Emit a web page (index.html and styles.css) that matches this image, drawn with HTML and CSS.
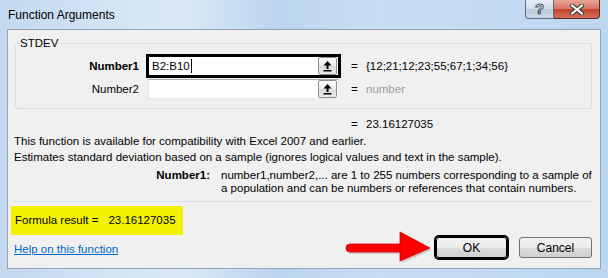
FILE: index.html
```html
<html>
<link rel="stylesheet" href="styles.css">

<head>
    <title>Function Arguments</title>
</head>

<body>
    <div class="window">
        <div class="titlebar">
            <span class="title">Function Arguments</span>
            <div class="caption">
                <span class="cap-help">?</span>
                <span class="cap-close">
                    <svg width="14" height="11" viewBox="0 0 14 11">
                        <path d="M2 1.5 L12 9.5 M12 1.5 L2 9.5" stroke="#3a3f48" stroke-width="4.2" stroke-linecap="round" />
                        <path d="M2 1.5 L12 9.5 M12 1.5 L2 9.5" stroke="#ffffff" stroke-width="2.2" stroke-linecap="round" />
                    </svg>
                </span>
            </div>
        </div>

        <div class="client">
            <fieldset class="group">
                <legend>STDEV</legend>
                <div class="args">
                    <label class="arg-name bold">Number1</label>
                    <div class="ref-box active">
                        <span class="ref-text">B2:B10</span><span class="caret"></span>
                        <span class="collapse">
                            <svg width="9" height="12" viewBox="0 0 9 12">
                                <polygon points="4.5,1 8.5,5.5 0.5,5.5" fill="#000" />
                                <rect x="3.5" y="5" width="2" height="4" fill="#000" />
                                <rect x="0.5" y="10" width="8" height="1.5" fill="#000" />
                            </svg>
                        </span>
                    </div>
                    <span class="eq">=</span>
                    <span class="arg-value">{12;21;12;23;55;67;1;34;56}</span>

                    <label class="arg-name">Number2</label>
                    <div class="ref-box">
                        <span class="ref-text"></span>
                        <span class="collapse">
                            <svg width="9" height="12" viewBox="0 0 9 12">
                                <polygon points="4.5,1 8.5,5.5 0.5,5.5" fill="#000" />
                                <rect x="3.5" y="5" width="2" height="4" fill="#000" />
                                <rect x="0.5" y="10" width="8" height="1.5" fill="#000" />
                            </svg>
                        </span>
                    </div>
                    <span class="eq">=</span>
                    <span class="arg-value hint">number</span>
                </div>
            </fieldset>

            <div class="result-line"><span class="eq">=</span><span>23.16127035</span></div>

            <p class="desc">This function is available for compatibility with Excel 2007 and earlier.<br>
                Estimates standard deviation based on a sample (ignores logical values and text in the sample).</p>

            <div class="arg-help">
                <span class="arg-help-name">Number1:</span>
                <span class="arg-help-text">number1,number2,... are 1 to 255 numbers corresponding to a sample of<br>a population and can be numbers or references that contain numbers.</span>
            </div>

            <div class="sep"></div>

            <div class="footer">
                <div class="footer-left">
                    <div class="formula">Formula result =<span class="formula-val">23.16127035</span></div>
                    <a class="help-link" href="#">Help on this function</a>
                </div>
                <div class="buttons">
                    <button class="btn ok">OK</button>
                    <button class="btn">Cancel</button>
                </div>
            </div>
        </div>

        <svg class="pointer" width="90" height="32" viewBox="0 0 90 32">
            <rect x="2" y="15" width="58" height="8" rx="4" fill="#8a8a8a" opacity="0.35" />
            <polygon points="57,3 87,19 57,32" fill="#8a8a8a" opacity="0.35" />
            <rect x="1" y="13" width="58" height="8" rx="4" fill="#ff0000" stroke="#d40000" stroke-width="0.8" />
            <polygon points="55,1 85,17 55,30" fill="#ff0000" stroke="#d40000" stroke-width="0.8" />
        </svg>
    </div>
</body>

</html>
```

FILE: styles.css
```css
body {
    margin: 0;
    width: 608px;
    height: 278px;
    overflow: hidden;
    font-family: "Liberation Sans", Arial, sans-serif;
    font-size: 11.5px;
    color: #000;
}

.window {
    position: relative;
    width: 608px;
    height: 278px;
    box-sizing: border-box;
    padding: 0 7px 9px 7px;
    background: linear-gradient(90deg, #c3d8ee 0%, #d6e6f5 22%, #dbe9f7 30%, #bcd5ee 45%, #c8ddf2 62%, #bdd7f1 100%);
    display: flex;
    flex-direction: column;
}

.titlebar {
    flex: none;
    height: 29px;
    display: flex;
    justify-content: space-between;
    align-items: flex-start;
}

.title {
    margin-top: 8px;
    margin-left: 1px;
    font-size: 12px;
    color: #000;
}

.caption {
    display: flex;
    margin-right: 1px;
}

.cap-help {
    width: 27px;
    height: 18px;
    border: 1px solid #5e6c7e;
    border-top: none;
    border-radius: 0 0 0 4px;
    background: linear-gradient(#e6edf5, #d3deea 50%, #bccbdc 52%, #cbd8e6);
    text-align: center;
    font-size: 15px;
    font-weight: bold;
    line-height: 18px;
    color: #fff;
    -webkit-text-stroke: 1px #4b5666;
}

.cap-close {
    width: 45px;
    height: 18px;
    border: 1px solid #5a2b24;
    border-top: none;
    border-left: none;
    border-radius: 0 0 4px 0;
    background: linear-gradient(#e8a597, #d77868 48%, #c4432f 52%, #d2705c);
    display: flex;
    align-items: center;
    justify-content: center;
}

.client {
    flex: 1;
    min-height: 0;
    background: #f0f0f0;
    border: 1px solid #95a4b5;
    padding: 6px 8px 0 6px;
    display: flex;
    flex-direction: column;
}

.group {
    margin: 0 0 0 1px;
    padding: 6px 0 9px 0;
    border: 1px solid #d5dfe5;
    border-radius: 3px;
}

.group legend {
    margin-left: 3px;
    padding: 0 1px;
    line-height: 14px;
}

.args {
    display: grid;
    grid-template-columns: 132px 203px 15px 1fr;
    grid-auto-rows: 20px;
    row-gap: 3px;
    align-items: center;
}

.arg-name {
    text-align: right;
    padding-right: 9px;
}

.bold {
    font-weight: bold;
}

.ref-box {
    width: 191px;
    height: 20px;
    box-sizing: border-box;
    background: #fff;
    border: 1px solid #abadb3;
    border-color: #abadb3 #e3e9ef #e3e9ef #e2e3ea;
    display: flex;
    align-items: center;
    padding: 0 1px 0 3px;
}

.ref-box.active {
    outline: 3px solid #000;
    outline-offset: -1px;
}

.ref-text {
    flex: none;
}

.caret {
    width: 1px;
    height: 14px;
    background: #000;
    margin-left: 1px;
}

.collapse {
    margin-left: auto;
    width: 17px;
    height: 16px;
    border: 1px solid #8e8f8f;
    border-radius: 2px;
    background: linear-gradient(#fdfdfd, #ececec 50%, #dcdcdc 52%, #e8e8e8);
    display: flex;
    align-items: center;
    justify-content: center;
}

.eq {
    display: inline-block;
    width: 15px;
}

.hint {
    color: #9d9d9d;
}

.result-line {
    margin-top: 8px;
    padding-left: 337px;
    line-height: 15px;
}

.desc {
    margin: 1px 0 0 0;
    line-height: 16px;
}

.arg-help {
    display: flex;
    margin-top: 4px;
    line-height: 13px;
    white-space: nowrap;
}

.arg-help-name {
    width: 196px;
    flex: none;
    text-align: right;
    font-weight: bold;
}

.arg-help-text {
    margin-left: 11px;
}

.sep {
    margin-top: 6px;
    height: 1px;
    flex: none;
    background: #d6dfe8;
}

.footer {
    flex: 1;
    display: flex;
    justify-content: space-between;
    align-items: flex-end;
    margin-top: 4px;
}

.footer-left {
    align-self: flex-start;
    display: flex;
    flex-direction: column;
}

.formula {
    margin-left: -3px;
    width: 168px;
    height: 29px;
    line-height: 29px;
    padding-left: 4px;
    white-space: nowrap;
    background: #f2f200;
}

.formula-val {
    margin-left: 10px;
}

.help-link {
    margin-top: 7px;
    color: #0066cc;
    line-height: 15px;
}

.buttons {
    display: flex;
    gap: 12px;
    margin-bottom: 10px;
}

.btn {
    width: 73px;
    height: 21px;
    font-family: "Liberation Sans", Arial, sans-serif;
    font-size: 12px;
    color: #000;
    border: 1px solid #707070;
    border-radius: 3px;
    background: linear-gradient(#f2f2f2, #ebebeb 50%, #dddddd 52%, #cfcfcf);
    padding: 0;
}

.btn.ok {
    width: 71px;
    border-color: #000;
    outline: 2px solid #000;
}

.pointer {
    position: absolute;
    left: 345px;
    top: 231px;
}
```
